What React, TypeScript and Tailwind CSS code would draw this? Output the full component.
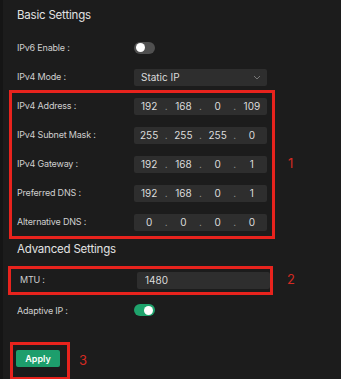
import { Fragment } from 'react';

const font = { fontFamily: 'Inter, "Noto Sans", sans-serif' };

function Label({ children }: { children: string }) {
  return <div className="w-[117px] shrink-0 text-[9px] text-[#cfcfcf] tracking-[-0.2px]">{children}</div>;
}

function IpInput({ parts }: { parts: string[] }) {
  return (
    <div className="grid h-[17px] w-[133px] grid-cols-[1fr_4px_1fr_4px_1fr_4px_1fr] items-center rounded-[2px] bg-[#2e2e2e] text-[10px] text-[#dcdcdc]">
      {parts.map((p, i) => (
        <Fragment key={i}>
          {i > 0 && <span className="text-center text-[#9a9a9a]">.</span>}
          <span className="text-center">{p}</span>
        </Fragment>
      ))}
    </div>
  );
}

function Toggle({ on }: { on: boolean }) {
  return (
    <div className={`flex h-[12px] w-[21px] items-center rounded-full px-[2px] ${on ? 'justify-end bg-[#1fa36c]' : 'justify-start bg-[#505050]'}`}>
      <div className="h-[9px] w-[9px] rounded-full bg-white" />
    </div>
  );
}

function Row({ label, children, className = '' }: { label: string; children: React.ReactNode; className?: string }) {
  return (
    <div className={`flex items-center ${className}`}>
      <Label>{label}</Label>
      {children}
    </div>
  );
}

export default function App() {
  const ipRows: [string, string[]][] = [
    ['IPv4 Address :', ['192', '168', '0', '109']],
    ['IPv4 Subnet Mask :', ['255', '255', '255', '0']],
    ['IPv4 Gateway :', ['192', '168', '0', '1']],
    ['Preferred DNS :', ['192', '168', '0', '1']],
    ['Alternative DNS :', ['0', '0', '0', '0']],
  ];

  return (
    <div className="flex h-[379px] w-[341px] overflow-hidden bg-[#1c1c1c]" style={font}>
      <div className="w-[3px] shrink-0 bg-[#151515]" />
      <div className="flex flex-1 flex-col">
        {/* Basic Settings */}
        <div className="pl-[14px] pt-[7px] text-[11.5px] leading-[16px] text-[#e2e2e2] tracking-[-0.2px]">Basic Settings</div>
        <div className="ml-[13px] mt-[3px] h-px bg-[#3a3a3a]" />

        <Row label="IPv6 Enable :" className="mt-[15px] pl-[14px]">
          <Toggle on={false} />
        </Row>

        <Row label="IPv4 Mode :" className="mt-[14px] pl-[14px]">
          <div className="flex h-[17px] w-[133px] items-center justify-between rounded-[2px] bg-[#2e2e2e] pl-[7px] pr-[6px] text-[10px] text-[#dcdcdc]">
            <span>Static IP</span>
            <svg width="8" height="5" viewBox="0 0 8 5" fill="none">
              <path d="M1 1l3 3 3-3" stroke="#777" strokeWidth="1" />
            </svg>
          </div>
        </Row>

        {/* annotated block 1 */}
        <div className="mt-[4px] flex items-center">
          <div className="ml-[6px] flex w-[266px] flex-col gap-[12px] border-[3px] border-[#e8231d] py-[5px] pl-[5px]">
            {ipRows.map(([label, parts]) => (
              <Row key={label} label={label}>
                <IpInput parts={parts} />
              </Row>
            ))}
          </div>
          <span className="ml-[13px] text-[13px] text-[#d42a22]">1</span>
        </div>

        {/* Advanced Settings */}
        <div className="pl-[14px] pt-[2px] text-[11.5px] leading-[16px] text-[#e2e2e2] tracking-[-0.2px]">Advanced Settings</div>
        <div className="ml-[13px] mt-[4px] h-px bg-[#3a3a3a]" />

        <div className="mt-[5px] flex items-center">
          <div className="ml-[5px] flex w-[265px] items-center border-[3px] border-[#e8231d] py-[3px] pl-[9px]">
            <Label>MTU :</Label>
            <div className="flex h-[17px] w-[133px] items-center rounded-[2px] bg-[#2e2e2e] pl-[8px] text-[10px] text-[#dcdcdc]">1480</div>
          </div>
          <span className="ml-[14px] text-[13px] text-[#d42a22]">2</span>
        </div>

        <Row label="Adaptive IP :" className="mt-[9px] pl-[14px]">
          <Toggle on={true} />
        </Row>

        <div className="mt-[25px] flex items-center">
          <div className="ml-[7px] w-[60px] border-[3px] border-[#e8231d] px-[3px] pb-[10px] pt-[5px]">
            <div className="flex h-[17px] w-[44px] items-center justify-center rounded-[2px] bg-[#1d9e6c] text-[9px] font-semibold text-white">Apply</div>
          </div>
          <span className="ml-[9px] text-[13px] text-[#d42a22]">3</span>
        </div>
      </div>
    </div>
  );
}
